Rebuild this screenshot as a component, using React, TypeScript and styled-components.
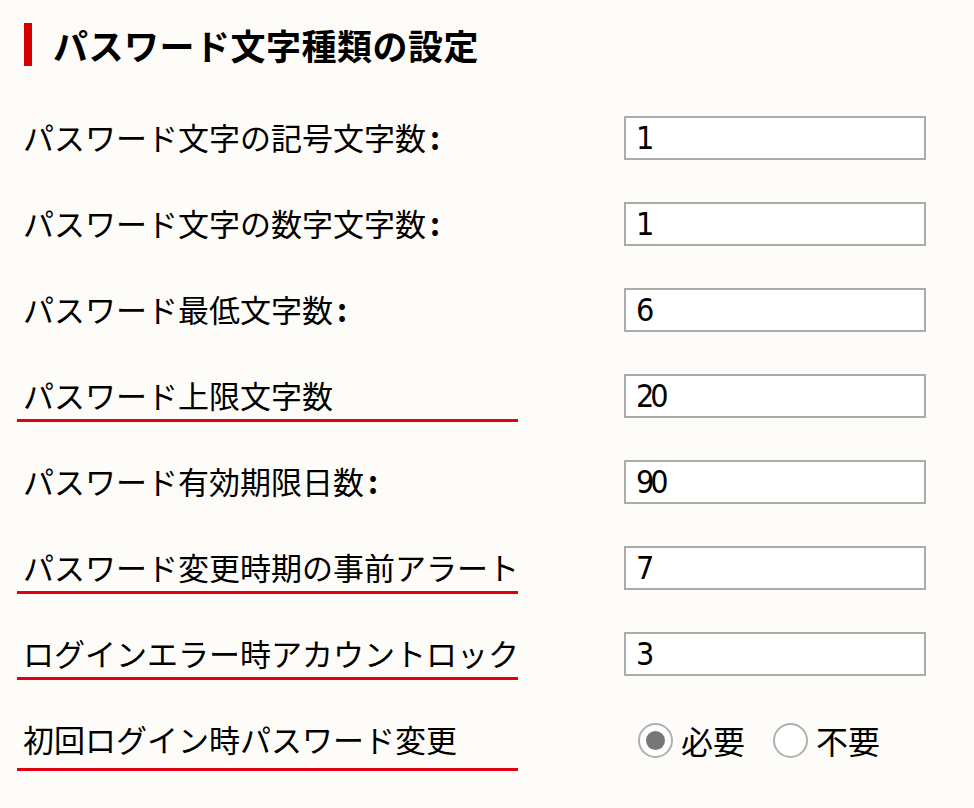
import React from "react";
import styled, { createGlobalStyle } from "styled-components";

const GlobalStyle = createGlobalStyle`
  html, body {
    margin: 0;
    padding: 0;
    background: #fdfcf8;
  }
  body {
    font-family: "Noto Sans CJK JP", "Noto Sans", sans-serif;
    color: #000;
  }
`;

const Page = styled.div`
  width: 974px;
  height: 808px;
  box-sizing: border-box;
  padding: 23px 0 0 17px;
  background: #fdfcf8;
`;

const Heading = styled.h2`
  display: flex;
  align-items: center;
  gap: 21px;
  margin: 0 0 50px 7px;
  height: 43px;
  font-family: "Noto Sans CJK JP", sans-serif;
  font-weight: 700;
  font-size: 35px;
  letter-spacing: 0.5px;
  line-height: 1;
`;

const Bar = styled.span`
  width: 8px;
  height: 43px;
  background: #d40000;
  flex: none;
`;

const Form = styled.div`
  display: flex;
  flex-direction: column;
  gap: 38px;
`;

const Row = styled.div`
  display: grid;
  grid-template-columns: 501px 302px;
  column-gap: 106px;
  align-items: start;
`;

const Label = styled.div<{ $underline?: boolean; $extra?: number }>`
  box-sizing: border-box;
  height: ${(p) => 48 + (p.$extra ?? 0)}px;
  padding: 0 0 ${(p) => 4 + (p.$extra ?? 0)}px 6px;
  display: flex;
  align-items: center;
  border-bottom: 3px solid ${(p) => (p.$underline ? "#e00010" : "transparent")};
  font-family: "Noto Sans CJK JP", sans-serif;
  font-size: 31px;
  line-height: 1;
  white-space: nowrap;
`;

const Colon = styled.span`
  display: inline-block;
  width: 18px;
  text-align: center;
  font-weight: 700;
`;

const Field = styled.input`
  box-sizing: border-box;
  width: 302px;
  height: 44px;
  border: 2px solid #ababab;
  background: #fff;
  padding: 0 0 0 10px;
  margin: 0;
  font-family: "Liberation Sans Narrow", "DejaVu Sans Condensed", "DejaVu Sans", sans-serif;
  font-stretch: condensed;
  font-size: 32px;
  letter-spacing: -4px;
  color: #000;
  outline: none;
`;

const RadioGroup = styled.div`
  height: 44px;
  display: flex;
  align-items: center;
  padding-left: 14px;
  font-family: "Noto Sans CJK JP", sans-serif;
  font-size: 32px;
  line-height: 1;
`;

const RadioLabel = styled.label`
  display: flex;
  align-items: center;
  gap: 8px;
  margin-right: 28px;
`;

const RadioCircle = styled.span<{ $checked?: boolean }>`
  box-sizing: border-box;
  width: 35px;
  height: 35px;
  border-radius: 50%;
  border: 2px solid #b0b0b0;
  background: #fff;
  display: flex;
  align-items: center;
  justify-content: center;
  &::after {
    content: "";
    width: 19px;
    height: 19px;
    border-radius: 50%;
    background: ${(p) => (p.$checked ? "#777777" : "transparent")};
  }
`;

type Item = { label: string; colon?: boolean; value: string; underline?: boolean };

const items: Item[] = [
  { label: "パスワード文字の記号文字数", colon: true, value: "1" },
  { label: "パスワード文字の数字文字数", colon: true, value: "1" },
  { label: "パスワード最低文字数", colon: true, value: "6" },
  { label: "パスワード上限文字数", value: "20", underline: true },
  { label: "パスワード有効期限日数", colon: true, value: "90" },
  { label: "パスワード変更時期の事前アラート", value: "7", underline: true },
  { label: "ログインエラー時アカウントロック", value: "3", underline: true },
];

export default function App() {
  return (
    <Page>
      <GlobalStyle />
      <Heading>
        <Bar />
        パスワード文字種類の設定
      </Heading>
      <Form>
        {items.map((it, i) => (
          <Row key={i}>
            <Label $underline={it.underline}>
              {it.label}
              {it.colon && <Colon>:</Colon>}
            </Label>
            <Field defaultValue={it.value} />
          </Row>
        ))}
        <Row>
          <Label $underline $extra={5}>
            初回ログイン時パスワード変更
          </Label>
          <RadioGroup>
            <RadioLabel>
              <RadioCircle $checked />
              必要
            </RadioLabel>
            <RadioLabel>
              <RadioCircle />
              不要
            </RadioLabel>
          </RadioGroup>
        </Row>
      </Form>
    </Page>
  );
}
